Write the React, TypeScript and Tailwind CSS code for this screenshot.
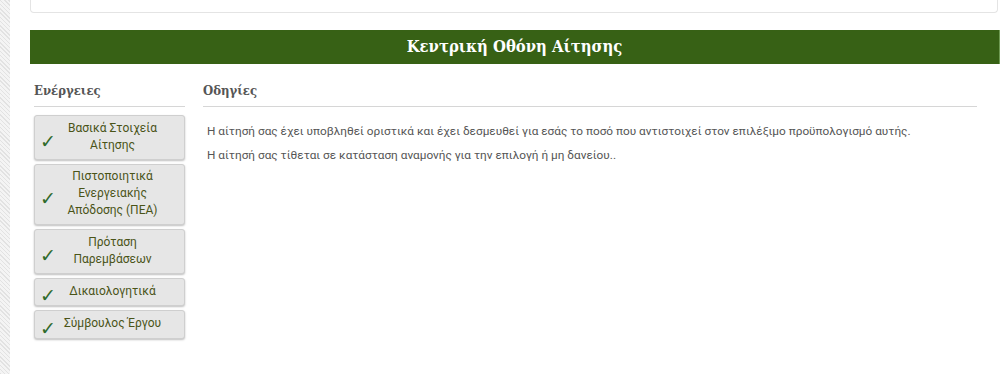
const actions = [
  { label: ["Βασικά Στοιχεία", "Αίτησης"], h: "h-[45px]" },
  { label: ["Πιστοποιητικά", "Ενεργειακής", "Απόδοσης (ΠΕΑ)"], h: "h-[61px]" },
  { label: ["Πρόταση", "Παρεμβάσεων"], h: "h-[45px]" },
  { label: ["Δικαιολογητικά"], h: "h-[28px]" },
  { label: ["Σύμβουλος Έργου"], h: "h-[29px]" },
];

function ActionButton({ label, h }: { label: string[]; h: string }) {
  return (
    <div
      className={`relative ${h} flex flex-col justify-center items-center rounded-[3px] border border-[#cfcfcf] bg-[#e6e6e6] shadow-[0_1px_2px_rgba(0,0,0,0.25)] pl-[10px] pr-[4px] pb-[2px] text-[12px] leading-[17px] text-[#4a5418]`}
    >
      <span className="absolute left-[5px] bottom-[calc(50%-13px)] text-[19px] leading-[20px] text-[#2f6b2b] font-['DejaVu_Sans',sans-serif]">
        ✓
      </span>
      {label.map((l) => (
        <span key={l} className="text-center whitespace-nowrap">
          {l}
        </span>
      ))}
    </div>
  );
}

export default function App() {
  return (
    <div className="flex w-[1000px] h-[374px] bg-white overflow-hidden font-['Roboto','Liberation_Sans',sans-serif]">
      {/* hatch strip */}
      <div className="w-[10px] shrink-0 bg-[#ececec] bg-[repeating-linear-gradient(45deg,#e2e2e2_0px,#e2e2e2_1px,#f4f4f4_1px,#f4f4f4_3px)]" />

      <div className="flex-1 pl-[20px]">
        {/* top card remnant */}
        <div className="h-[13px] mr-[2px] rounded-b-[4px] border border-t-0 border-[#e4e4e4] bg-white" />

        {/* title bar */}
        <div className="mt-[17px] h-[34px] flex items-center justify-center bg-[#376115] border-r border-[#6e9a52]">
          <h1 className="text-white font-bold text-[16.5px] font-['DejaVu_Serif_Condensed','DejaVu_Serif',serif]">
            Κεντρική Οθόνη Αίτησης
          </h1>
        </div>

        <div className="flex pl-[4px] pt-[14px]">
          {/* left column */}
          <div className="w-[151px] shrink-0">
            <h2 className="h-[28px] pt-[3px] text-[13px] font-bold text-[#555] font-['DejaVu_Serif_Condensed','DejaVu_Serif',serif]">
              Ενέργειες
            </h2>
            <div className="border-b border-[#d6d6d6]" />
            <div className="mt-[8px] flex flex-col gap-[4px]">
              {actions.map((a) => (
                <ActionButton key={a.label[0]} label={a.label} h={a.h} />
              ))}
            </div>
          </div>

          {/* right column */}
          <div className="ml-[18px] w-[774px]">
            <h2 className="h-[28px] pt-[3px] text-[13px] font-bold text-[#555] font-['DejaVu_Serif_Condensed','DejaVu_Serif',serif]">
              Οδηγίες
            </h2>
            <div className="border-b border-[#d6d6d6]" />
            <div className="pl-[4px] pt-[16px] text-[11.8px] text-[#555] leading-[16px] flex flex-col gap-[8px]">
              <p>
                Η αίτησή σας έχει υποβληθεί οριστικά και έχει δεσμευθεί για εσάς το ποσό που αντιστοιχεί στον επιλέξιμο προϋπολογισμό αυτής.
              </p>
              <p>Η αίτησή σας τίθεται σε κατάσταση αναμονής για την επιλογή ή μη δανείου..</p>
            </div>
          </div>
        </div>
      </div>
    </div>
  );
}
